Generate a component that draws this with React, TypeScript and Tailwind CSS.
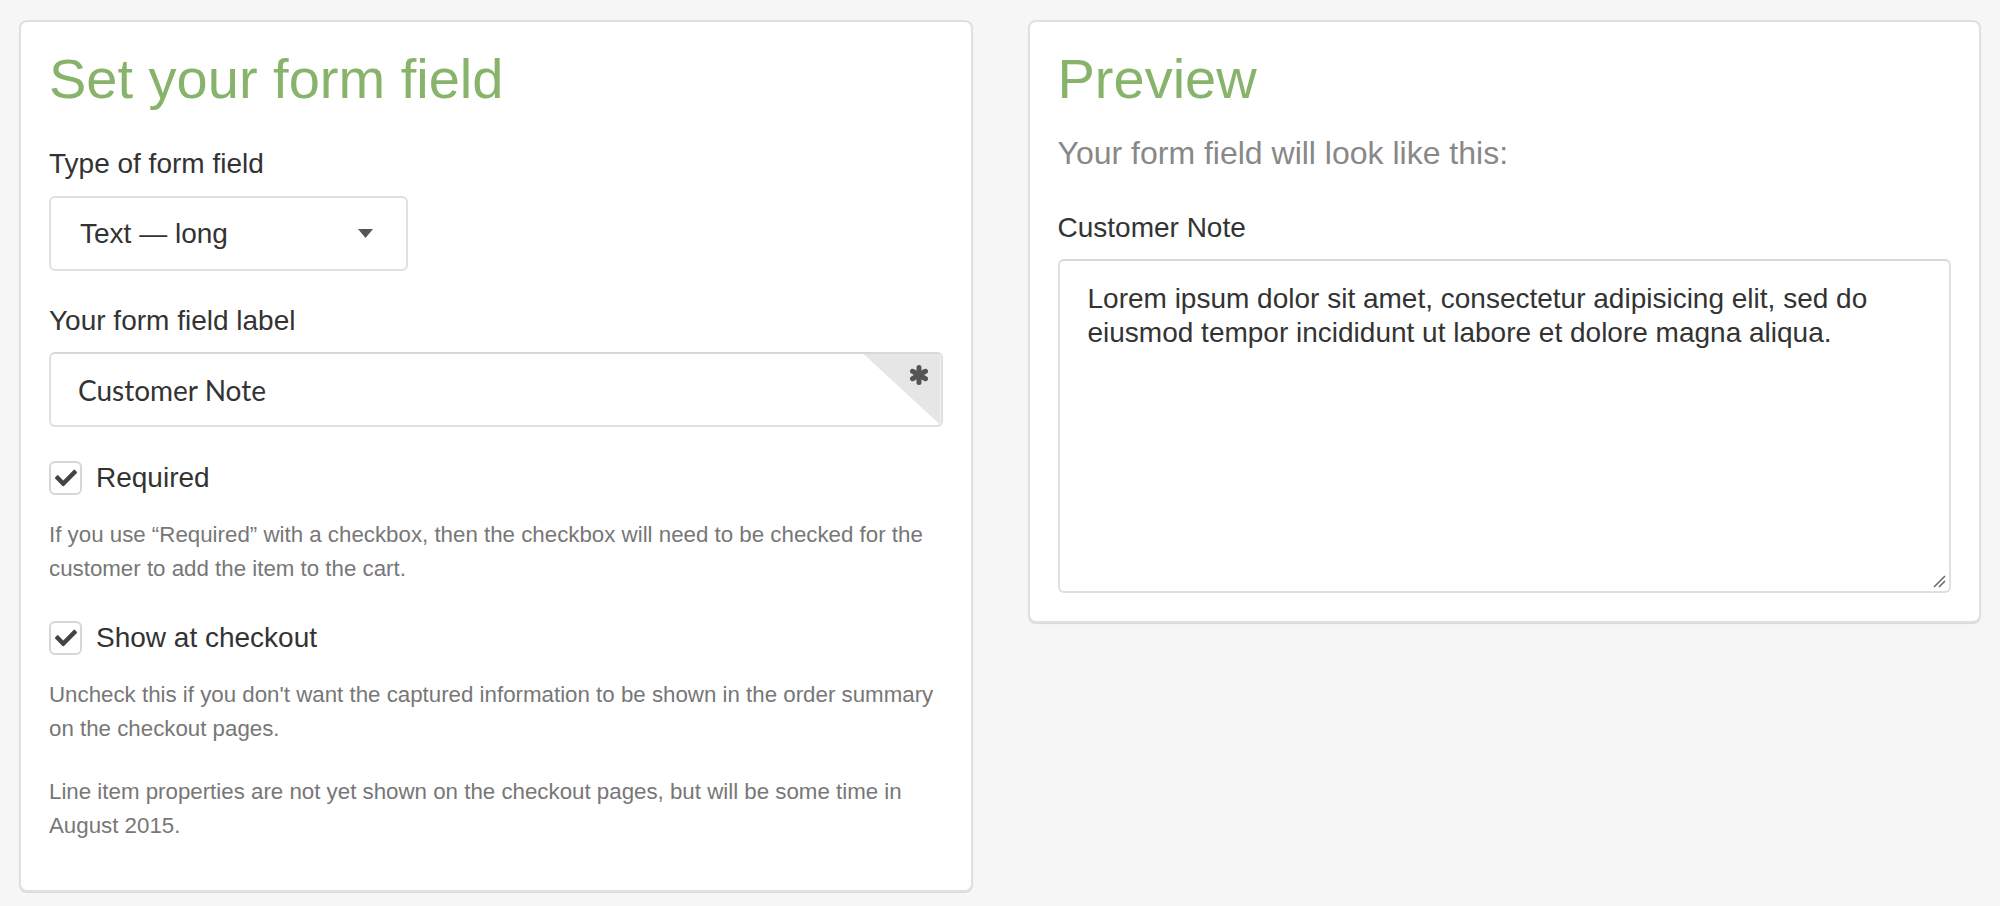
import { FaCheck } from 'react-icons/fa';

const sans = "font-['Liberation_Sans',Arial,sans-serif]";

function Checkbox({ label }: { label: string }) {
  return (
    <div className="flex items-center gap-[14px] h-[33px]">
      <div className="w-[33px] h-[34px] rounded-md border-2 border-[#d6d6d6] bg-white flex items-center justify-center">
        <FaCheck className="text-[#444] w-[22px] h-[22px]" />
      </div>
      <span className="text-[28px] leading-[34px] text-[#333]">{label}</span>
    </div>
  );
}

function HelpText({ children, className = '' }: { children: React.ReactNode; className?: string }) {
  return <p className={`text-[22.3px] leading-[34px] text-[#777] ${className}`}>{children}</p>;
}

export default function App() {
  return (
    <div className={`min-h-screen bg-[#f6f6f6] ${sans}`}>
      <div className="flex items-start gap-[55px] px-[19px] pt-[20px]">
        {/* Settings card */}
        <section className="flex-1 bg-white border-2 border-[#e0e0e0] rounded-lg shadow-[0_1px_1px_rgba(0,0,0,0.12)] px-[28px] pt-[24px] pb-[47px]">
          <h1 className="text-[56px] leading-[66px] text-[#87b46a]">Set your form field</h1>

          <label className="block mt-[35px] text-[28px] leading-[34px] text-[#333]">Type of form field</label>
          <div className="mt-[15px] w-[359px] h-[75px] rounded-md border-2 border-[#e0e0e0] bg-white flex items-center justify-between pl-[29px] pr-[33px]">
            <span className="text-[28px] text-[#333]">Text — long</span>
            <svg width="15" height="9" viewBox="0 0 15 9" className="mt-[-1px]">
              <path d="M0 0 H15 L7.5 9 Z" fill="#555" />
            </svg>
          </div>

          <label className="block mt-[33px] text-[28px] leading-[34px] text-[#333]">Your form field label</label>
          <div className="relative mt-[14px] h-[75px] rounded-md border-2 border-[#e0e0e0] border-t-[#d8d8d8] bg-white overflow-hidden flex items-center pl-[27px]">
            <span className="font-['Lato',sans-serif] text-[28px] text-[#333]">Customer Note</span>
            <div className="absolute top-0 right-0 w-[77px] h-full bg-[#e6e6e6] [clip-path:polygon(0_0,100%_0,100%_100%)]" />
            <svg className="absolute top-[11px] right-[12px]" width="20" height="20" viewBox="0 0 20 20">
              <g stroke="#555" strokeWidth="5" strokeLinecap="round">
                <path d="M10 2.5 V17.5" />
                <path d="M3.5 6.25 L16.5 13.75" />
                <path d="M3.5 13.75 L16.5 6.25" />
              </g>
            </svg>
          </div>

          <div className="mt-[34px]">
            <Checkbox label="Required" />
          </div>
          <HelpText className="mt-[24px]">
            If you use “Required” with a checkbox, then the checkbox will need to be checked for the customer to add the item to the cart.
          </HelpText>

          <div className="mt-[35px]">
            <Checkbox label="Show at checkout" />
          </div>
          <HelpText className="mt-[24px]">
            Uncheck this if you don't want the captured information to be shown in the order summary on the checkout pages.
          </HelpText>
          <HelpText className="mt-[29px]">
            Line item properties are not yet shown on the checkout pages, but will be some time in August 2015.
          </HelpText>
        </section>

        {/* Preview card */}
        <section className="flex-1 bg-white border-2 border-[#e0e0e0] rounded-lg shadow-[0_1px_1px_rgba(0,0,0,0.12)] px-[28px] pt-[24px] pb-[28px]">
          <h1 className="text-[56px] leading-[66px] text-[#87b46a]">Preview</h1>
          <p className="mt-[22px] text-[32px] leading-[38px] text-[#888]">Your form field will look like this:</p>

          <label className="block mt-[39px] text-[28px] leading-[34px] text-[#333]">Customer Note</label>
          <div className="relative mt-[14px] h-[334px] rounded-md border-2 border-[#e0e0e0] border-t-[#d8d8d8] bg-white pt-[21px] pl-[28px] pr-[28px]">
            <p className="text-[28px] leading-[34px] text-[#333]">
              Lorem ipsum dolor sit amet, consectetur adipisicing elit, sed do eiusmod tempor incididunt ut labore et dolore magna aliqua.
            </p>
            <svg className="absolute bottom-[3px] right-[3px]" width="14" height="14" viewBox="0 0 14 14">
              <path d="M2 13 L13 2 M7 13 L13 7" stroke="#666" strokeWidth="1.5" />
            </svg>
          </div>
        </section>
      </div>
    </div>
  );
}
